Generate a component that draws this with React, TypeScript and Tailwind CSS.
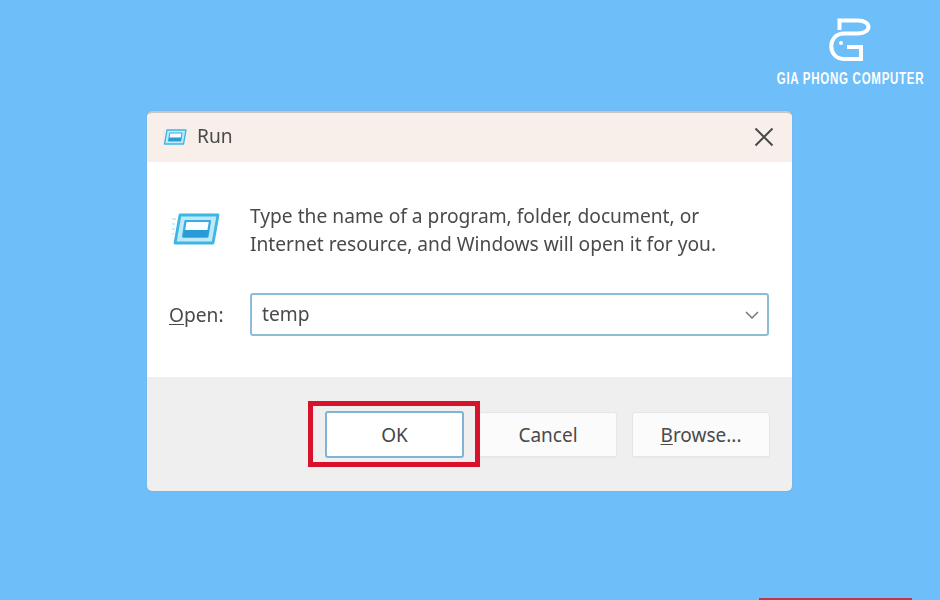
function RunIcon({ className }: { className?: string }) {
  return (
    <svg viewBox="0 0 48 32" className={className}>
      <path d="M0 6 H4 M0 11 H3 M0 16 H3 M0 21 H2" stroke="#bfe6f5" strokeWidth="1.5" />
      <path d="M8 2 H46 L41 30 H3 Z" fill="#bfe9f8" stroke="#3db6e3" strokeWidth="2.8" strokeLinejoin="round" />
      <path d="M13.5 8 H38 L35.5 23.5 H11 Z" fill="#f8fdff" stroke="#38ace0" strokeWidth="2.2" strokeLinejoin="round" />
      <path d="M12.5 17 H37 L35.5 24.5 H11 Z" fill="#2b9bd6" />
    </svg>
  );
}

function DialogButton({ children, focused }: { children: React.ReactNode; focused?: boolean }) {
  return (
    <button
      className={
        focused
          ? "h-[47px] w-[139px] rounded-[3px] border-2 border-[#7fb4d4] bg-white pt-[2px] text-[19px] text-[#444]"
          : "mt-[1px] h-[46px] w-[138px] rounded-[3px] border border-[#e6e6e6] border-b-2 bg-[#fbfbfb] pt-[1px] text-[19px] text-[#4a4a4a]"
      }
    >
      {children}
    </button>
  );
}

export default function App() {
  return (
    <div className="relative h-[600px] w-[940px] overflow-hidden bg-[#6ebef9] pl-[147px] pt-[111px] font-['Noto_Sans','Open_Sans',sans-serif]">
      <div className="absolute right-[15px] top-[16px] flex w-[150px] flex-col items-center">
        <svg viewBox="0 0 56 56" className="-mt-[4px] h-[56px] w-[56px]" fill="none" stroke="#fff" strokeWidth="4">
          <path d="M17.5 18 V8.5 H36 C50 8.5 50 21.5 36 21.5 H22 C5 21.5 5 47 22 47 H39 V35 H25" />
          <circle cx="19" cy="31" r="2" fill="#fff" stroke="none" />
        </svg>
        <span className="mt-[3px] scale-x-[0.72] whitespace-nowrap font-['Liberation_Sans',sans-serif] text-[16px] font-bold leading-[16px] tracking-[1px] text-white">
          GIA PHONG COMPUTER
        </span>
      </div>

      <div className="flex h-[380px] w-[645px] flex-col overflow-hidden rounded-[5px] border-t-2 border-[#c9c7c4] shadow-[0_0_1px_#8a8a8a] blur-[0.4px]">
        <div className="flex h-[49px] shrink-0 items-center bg-[#f8efea] pb-[2px] pl-[16px] pr-[18px]">
          <RunIcon className="h-[16px] w-[24px]" />
          <span className="ml-[10px] text-[19.2px] text-[#4a4a4a]">Run</span>
          <svg viewBox="0 0 20 20" className="ml-auto h-[20px] w-[20px]" stroke="#4a4a4a" strokeWidth="2" fill="none">
            <path d="M1.5 1.5 L18.5 18.5 M18.5 1.5 L1.5 18.5" />
          </svg>
        </div>

        <div className="h-[215px] shrink-0 bg-white pl-[22px] pr-[23px]">
          <div className="flex pt-[40px]">
            <RunIcon className="ml-[3px] mt-[11px] h-[32px] w-[48px]" />
            <p className="ml-[30px] whitespace-nowrap text-[19.2px] leading-[28px] text-[#4a4a4a]">
              Type the name of a program, folder, document, or
              <br />
              Internet resource, and Windows will open it for you.
            </p>
          </div>
          <div className="mt-[35px] flex items-center">
            <label className="w-[81px] pt-[1px] text-[19.2px] text-[#4a4a4a]">
              <span className="underline underline-offset-2">O</span>pen:
            </label>
            <div className="flex h-[43px] flex-1 items-center rounded-[3px] border-2 border-[#8dbcd9] bg-white pl-[10px] pr-[8px] text-[19.2px] text-[#4a4a4a]">
              temp
              <svg viewBox="0 0 14 8" className="ml-auto h-[8px] w-[14px]" fill="none" stroke="#777" strokeWidth="1.5">
                <path d="M1 1 L7 7 L13 1" />
              </svg>
            </div>
          </div>
        </div>

        <div className="flex flex-1 items-start bg-[#efefef] pl-[178px] pr-[22px] pt-[34px]">
          <div className="relative">
            <DialogButton focused>OK</DialogButton>
            <div className="absolute -bottom-[9px] -left-[17px] -right-[16px] -top-[10px] border-[5px] border-[#d7122a]" />
          </div>
          <div className="ml-[15px] flex gap-[15px]">
            <DialogButton>Cancel</DialogButton>
            <DialogButton>
              <span className="underline underline-offset-2">B</span>rowse...
            </DialogButton>
          </div>
        </div>
      </div>

      <div className="absolute bottom-0 left-[759px] h-[2px] w-[153px] bg-[#c0344f]" />
    </div>
  );
}
